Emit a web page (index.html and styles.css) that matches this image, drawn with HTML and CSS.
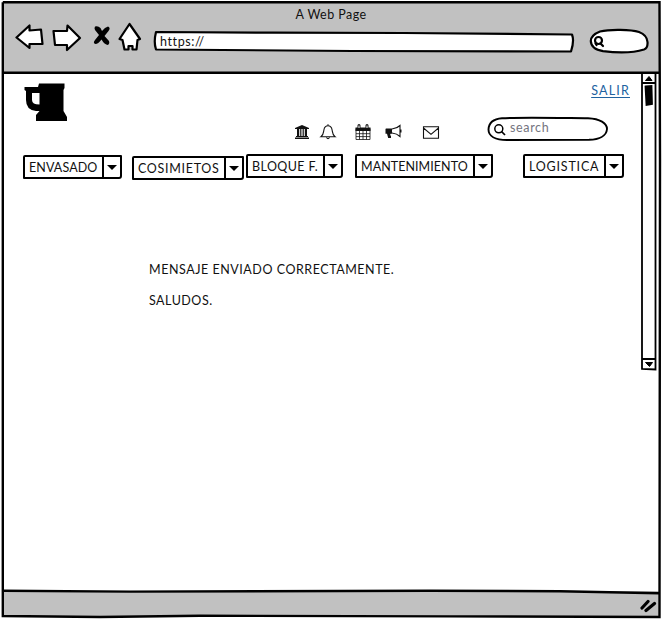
FILE: index.html
```html
<!DOCTYPE html>
<html lang="es">
<head>
<meta charset="utf-8">
<title>A Web Page</title>
<link rel="stylesheet" href="styles.css">
</head>
<body>
<div class="window">
  <svg class="frame" viewBox="0 0 662 619" fill="none" stroke="#000" stroke-width="2.4">
    <path d="M2.8 2.2H659.5L660 160 659.5 617 450 616.4 200 615.7 100 617 2.8 616V2.2"/>
    <path d="M3 72.8H659M3 590.8L130 591.6 430 590.8 560 591.2 659 593.3"/>
  </svg>
  <header class="chrome">
    <h1 class="title">A Web Page</h1>
    <div class="toolbar">
      <svg class="controls" viewBox="0 0 128 32" fill="#fff" stroke="#000" stroke-width="2.2" stroke-linejoin="round">
        <path d="M1.500 15.500L14.500 3.500V8.500L26 7.500 27.500 22 14.500 22V26z"/>
        <path d="M38.500 9L52 9 52.500 3.500 65 16 52 28 52 23 40 23z"/>
        <path fill="#000" stroke="none" d="M80 4.500Q83 3.500 85.500 6L87 9Q90 5 93 4.500 96 6 93.500 9L89.500 14 94 19Q95 22 92.500 23 89 22 86.500 17.500 83 22 80.500 22 77.500 21 80 18L84 13 80 8Q79 6 80 4.500z"/>
        <path d="M114.500 2L125 17 122.500 18 121.500 27.500H117.500V24H113.500V27.500H109.500L107.500 18 104.500 17z"/>
      </svg>
      <div class="address">
        <svg class="outline" viewBox="0 0 422 24" fill="#fff" stroke="#000" stroke-width="2.200" stroke-linejoin="round"><path d="M3 3L120 3.700 250 4 419 5.500Q421.500 12 418 22.500L200 22 3 20.500Q.5 13 3 3z"/></svg>
        <span class="url">https://</span>
      </div>
      <svg class="chrome-search" viewBox="0 0 62 26" fill="#fff" stroke="#000" stroke-width="2.200">
        <path d="M12 3.500C22 1 43 1.500 51 4Q59 7 59.500 14 60 20 56 21.500C45 25 30 25 15 23.200 8 22 3 19 2.800 13Q3 7 12 3.500z"/>
        <ellipse cx="10.500" cy="12.500" rx="3.500" ry="3.500"/><path d="M12.500 15.500L15 18M7.500 15.500L8.500 17" stroke-linecap="round"/>
      </svg>
    </div>
  </header>
  <main class="page">
    <div class="content">
      <div class="masthead">
        <svg class="logo" viewBox="0 0 43 39"><path fill-rule="evenodd" d="M15 .5H40.500V5L39.500 7V28L43 34V38H12V32L15.500 28H12Q2 27 2 17V8L.5 7V4H14zM8 10V17Q8 21.500 15.500 21.500V10z"/></svg>
        <a class="logout" href="#">SALIR</a>
      </div>
      <div class="tools">
        <svg class="icons" viewBox="0 0 146 18" fill="none" stroke="#111" stroke-width="1.100">
          <path fill="#111" stroke="none" d="M1 5V4L8 1 15 4V5zM3 5H5.200V12H6.200V5H7.400V12H8.600V5H9.800V12H10.800V5H13V12H14V13H2V12H3zM1 13.600H15V15H1z"/>
          <path d="M27 12.800C29.500 11 29.500 8 29.900 6 30.400 3 32 1.800 34 1.800S37.600 3 38.100 6C38.500 8 38.500 11 41 12.800zM34 .3V2M32.500 13.500Q34 15.700 35.500 13.500"/>
          <path d="M62 4.500H76V15.500H62zM65.500 7V15.500M69 7V15.500M72.500 7V15.500M62 9.700H76M62 12.600H76" stroke-width=".8"/>
          <path d="M61.500 3.500H76.500V7H61.500z" fill="#111" stroke="none"/><path d="M65 1.500V3.700M73 1.500V3.700" stroke-width="3" stroke-linecap="round"/><path d="M65 1.500V4M73 1.500V4" stroke="#fff"/>
          <path d="M98 5Q103 4.500 106 1.500V12.500Q103 9.500 98 9"/><path fill="#111" stroke="none" d="M92 4.500H98V9.700H96.500Q95.500 11 97 12V14H94.200L93 9.700H91.500V5zM106 5.500H107.500V8.500H106z"/>
          <path d="M129.500 2.800H144.500V14.200H129.500zM129.500 4L137 10.300 144.500 4"/>
        </svg>
        <div class="search">
          <svg class="outline" viewBox="0 0 122 26" fill="#fff" stroke="#000" stroke-width="1.900"><path d="M15 2.300C30 1.200 75 2 101 2.200 113 2.800 120 7 120 13 119.500 20 112 23.500 102 23.800L20 24C8 24 1.500 20 1.500 13.500 1.800 7 6 3 15 2.300z"/><circle cx="11.800" cy="12.800" r="4" stroke-width="1.500"/><path d="M14.500 15.500L18 19" stroke-width="1.700"/></svg>
          <span class="placeholder">search</span>
        </div>
      </div>
      <nav class="menu">
        <div class="combo envasado"><span>ENVASADO</span><i></i></div>
        <div class="combo cosimietos"><span>COSIMIETOS</span><i></i></div>
        <div class="combo bloque"><span>BLOQUE F.</span><i></i></div>
        <div class="combo mantenimiento"><span>MANTENIMIENTO</span><i></i></div>
        <div class="combo logistica"><span>LOGISTICA</span><i></i></div>
      </nav>
      <section class="message">
        <p class="sent">MENSAJE ENVIADO CORRECTAMENTE.</p>
        <p class="regards">SALUDOS.</p>
      </section>
    </div>
    <svg class="scrollbar" viewBox="0 0 17 298" fill="none" stroke="#000" stroke-width="1.800">
      <path d="M2 1V296L15.500 296.500V1M2 10H15M2 286H15"/>
      <path d="M5.500 7.500L9 3.500 12 7.500zM5.500 289.500H12.500L9.500 293.500z" fill="#000" stroke-width="1"/>
      <path d="M5.500 13.500L11.500 13 12 31 6.500 32z" fill="#000"/>
    </svg>
  </main>
  <footer class="status">
    <svg class="grip" viewBox="0 0 18 16" stroke="#000" stroke-width="3.200" stroke-linecap="round"><path d="M2 11L8 4.500M6 13.500L14.500 6.500"/></svg>
  </footer>
</div>
</body>
</html>
```
FILE: styles.css
```css
* { box-sizing: border-box; }
body { margin: 0; background: #fff; color: #111; font: 12.5px/16px Lato, "Liberation Sans", sans-serif; }
svg { display: block; flex: none; }
.window { position: relative; display: flex; flex-direction: column; width: 662px; height: 619px; padding: 2px 2px 2px 3px; }
.frame { position: absolute; inset: 0; width: 662px; height: 619px; pointer-events: none; z-index: 2; }
.chrome { height: 71px; background: #c1c1c1; }
.title { margin: 0; padding: 5px 1px 0 0; height: 20px; font-size: 12.5px; font-weight: 400; line-height: 16px; text-align: center; letter-spacing: .45px; }
.toolbar { display: flex; padding-left: 12px; }
.controls { width: 128px; height: 32px; }
.address { position: relative; width: 422px; height: 24px; margin: 7px 0 0 10px; }
.outline { position: absolute; inset: 0; width: 100%; height: 100%; }
.url { position: relative; display: block; padding: 5px 0 0 7px; letter-spacing: .6px; }
.chrome-search { width: 62px; height: 26px; margin: 6px 0 0 13px; }
.page { display: flex; justify-content: space-between; height: 518px; }
.content { width: 630px; }
.masthead { display: flex; justify-content: space-between; padding: 9px 3px 0 21px; height: 43px; }
.logo { width: 43px; height: 39px; margin-top: 1px; }
.logout { margin-top: 1px; color: #21629f; text-underline-offset: 2px; height: 16px; letter-spacing: 1.2px; }
.tools { display: flex; padding-left: 291px; height: 38px; }
.icons { width: 146px; height: 18px; margin-top: 8px; }
.search { position: relative; width: 122px; height: 26px; margin-left: 47px; }
.placeholder { position: relative; display: block; padding: 4px 0 0 23px; color: #747480; letter-spacing: .65px; }
.menu { display: flex; padding-left: 20px; height: 28px; }
.combo { display: flex; height: 24px; border: 2px solid #000; border-radius: 2px 1px 3px 1px; line-height: 21px; white-space: nowrap; }
.combo span { flex: 1; padding-left: 4px; }
.combo i { display: flex; align-items: center; justify-content: center; width: 18px; border-left: 2px solid #000; }
.combo i::before { content: ""; border: 5px solid transparent; border-top: 5px solid #000; border-bottom: 0; }
.envasado { width: 99px; margin-top: 1px; letter-spacing: .1px; }
.cosimietos { width: 112px; margin: 2px 0 0 10px; letter-spacing: .7px; }
.bloque { width: 97px; margin-left: 2px; letter-spacing: .4px; }
.mantenimiento { width: 138px; margin-left: 12px; letter-spacing: .05px; }
.logistica { width: 101px; margin-left: 30px; letter-spacing: .8px; }
.message { padding: 80px 0 0 146px; }
.message p { margin: 0 0 15px; }
.message .sent { letter-spacing: .54px; }
.message .regards { letter-spacing: .5px; }
.scrollbar { width: 17px; height: 298px; margin-right: 3px; }
.status { display: flex; justify-content: flex-end; height: 26px; padding: 6px 2px 0 0; background: #c1c1c1; }
.grip { width: 18px; height: 16px; }
```
